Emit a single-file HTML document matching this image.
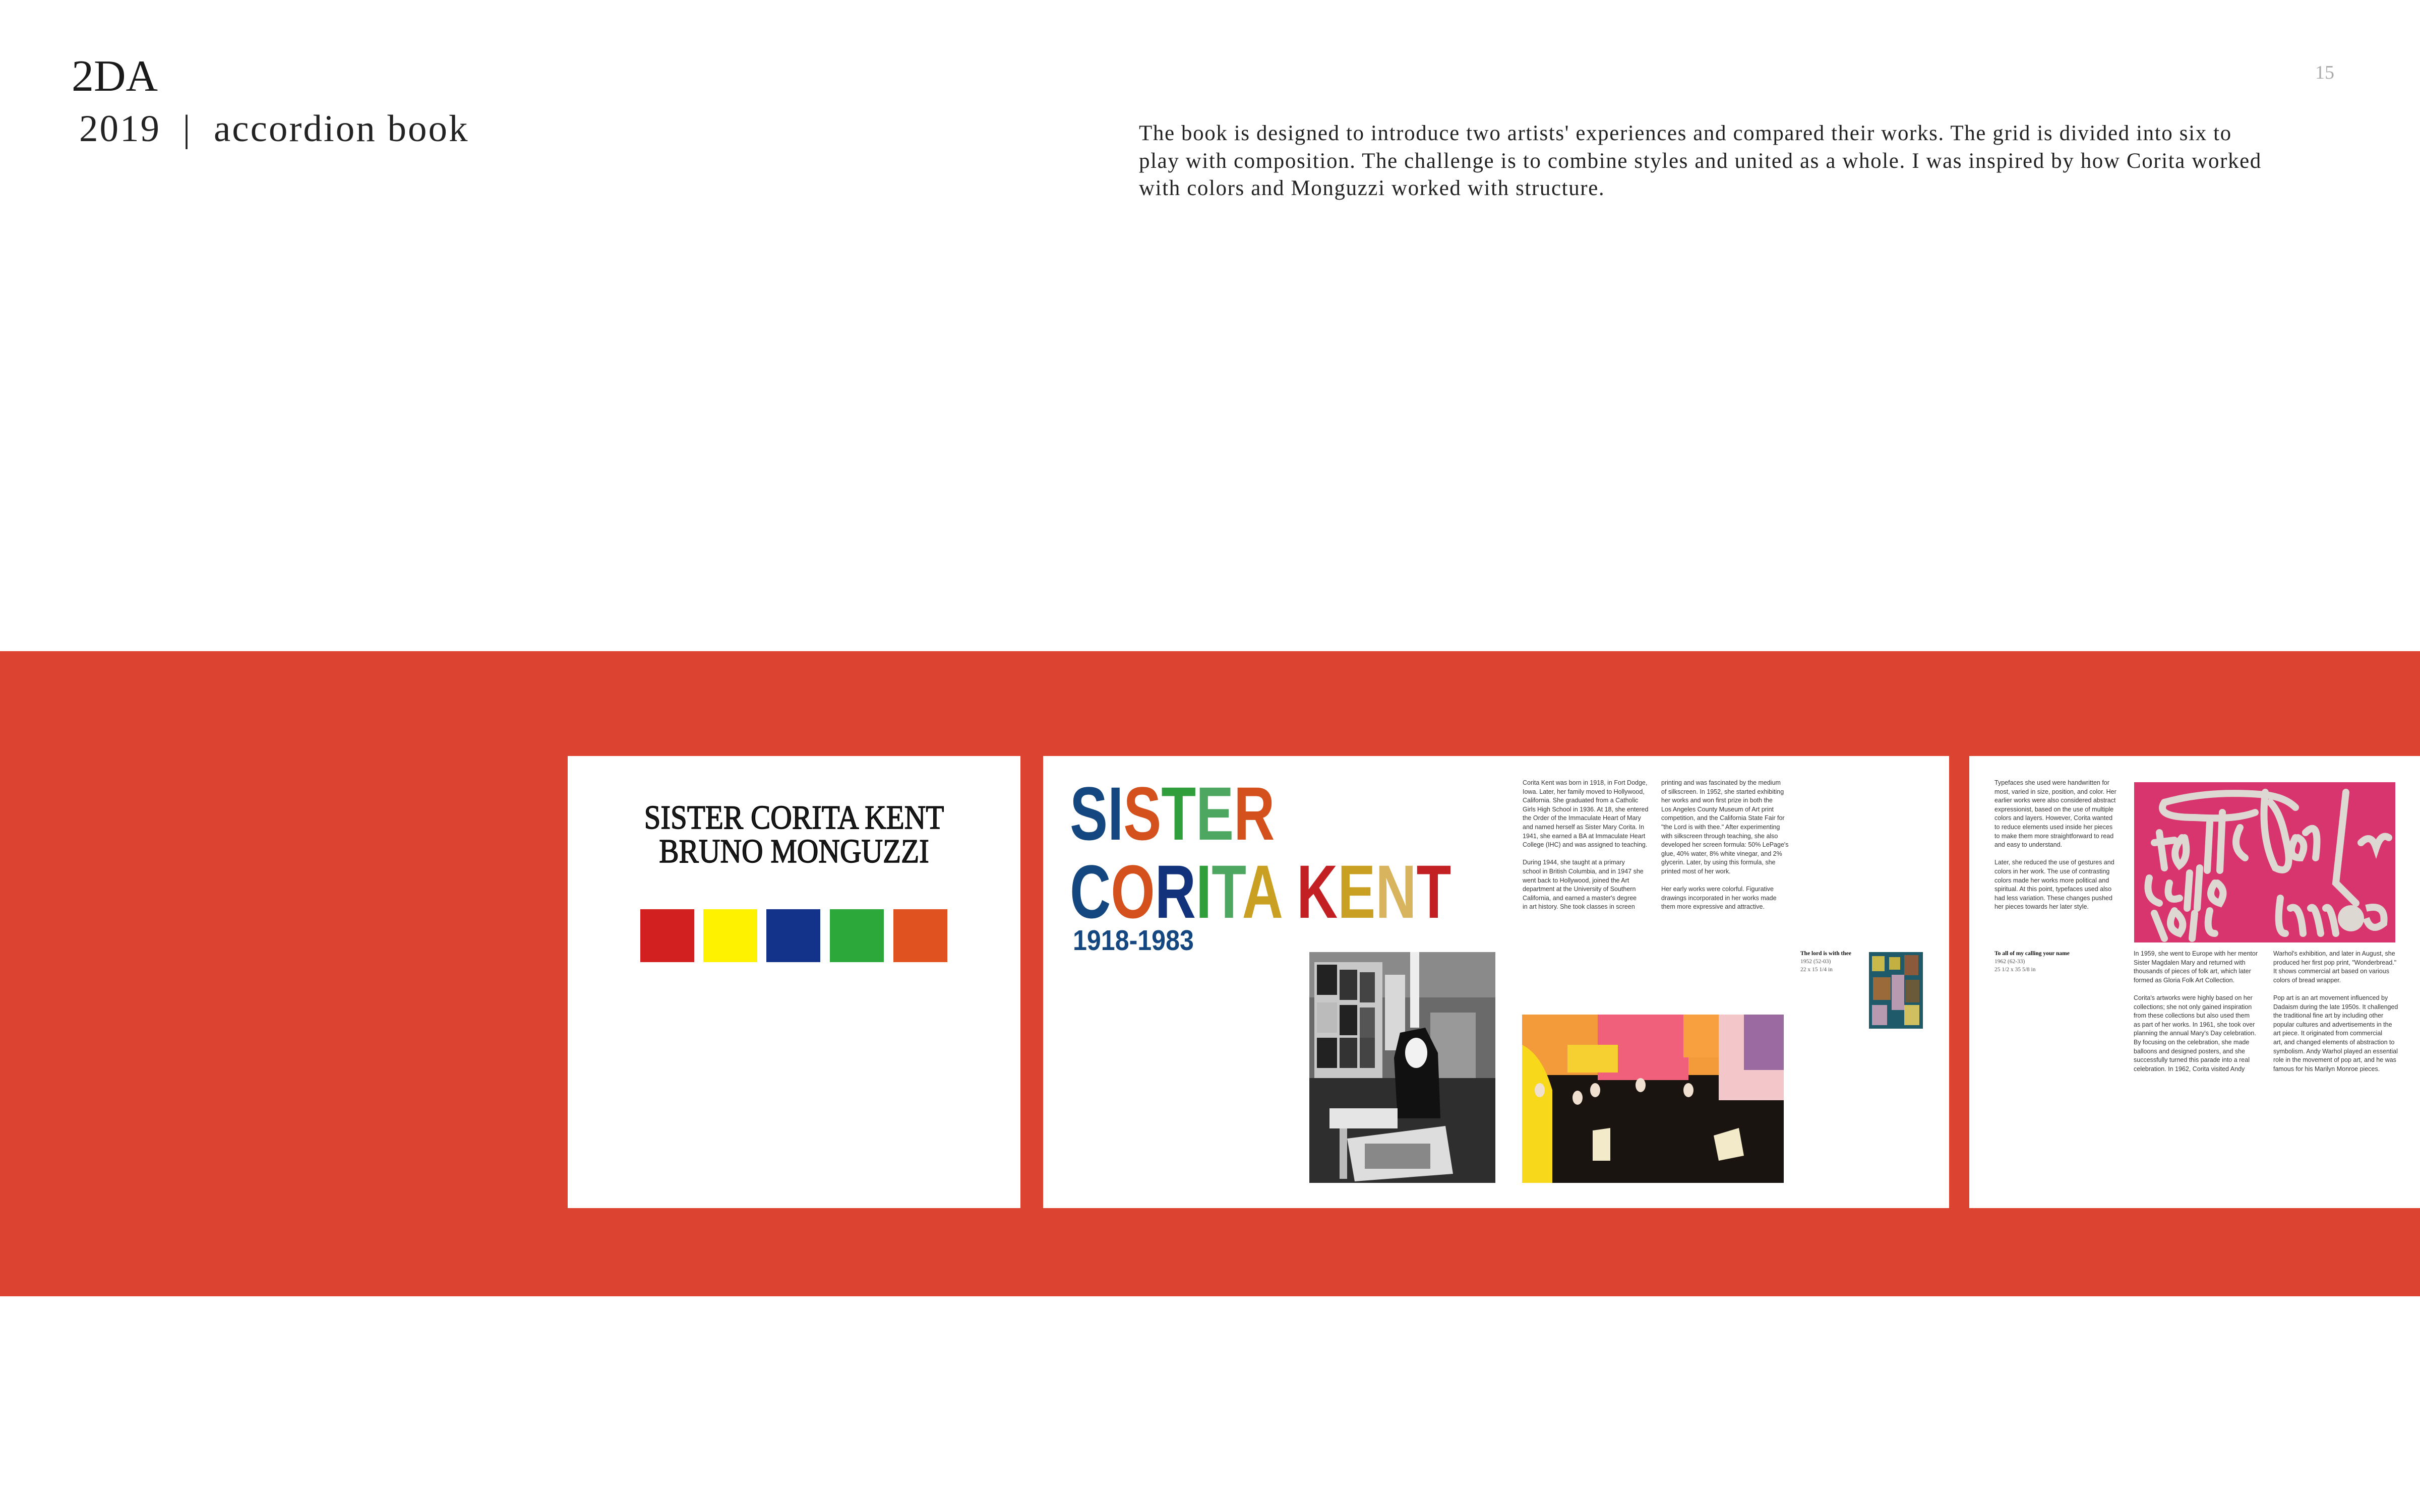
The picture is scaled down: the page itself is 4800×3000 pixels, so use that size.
<!DOCTYPE html>
<html><head><meta charset="utf-8">
<style>
html,body{margin:0;padding:0;}
body{width:4800px;height:3000px;position:relative;background:#fff;overflow:hidden;font-family:"Liberation Serif",serif;color:#1a1a1a;}
.abs{position:absolute;}
.t2da{left:142px;top:108px;font-size:88px;line-height:1;}
.sub{left:157px;top:218px;font-size:75px;line-height:1;font-weight:300;color:#222;white-space:nowrap;letter-spacing:3px;}
.desc{left:2259px;top:238px;font-size:43px;line-height:54.5px;white-space:nowrap;color:#222;letter-spacing:1.6px;}
.pg{left:4592px;top:122px;font-size:38px;color:#aaa;}
.band{left:0;top:1292px;width:4800px;height:1280px;background:#dd4331;}
.panel{background:#fff;top:1500px;height:897px;}
.ttl{font-size:67px;line-height:1;white-space:nowrap;transform-origin:center top;-webkit-text-stroke:1.4px #000;}
.sq{top:1804px;width:107px;height:105px;}
.big{font-family:"Liberation Sans",sans-serif;font-weight:bold;font-size:150px;line-height:1;white-space:nowrap;transform:scaleX(0.75);transform-origin:left top;}
.sm{font-family:"Liberation Sans Narrow","Liberation Sans",sans-serif;font-size:12.5px;line-height:17.6px;white-space:nowrap;color:#333;}
.cap{font-family:"Liberation Serif",serif;font-size:11.5px;line-height:16px;color:#555;white-space:nowrap;}
</style></head><body>
<div class="abs t2da">2DA</div>
<div class="abs sub">2019 &nbsp;|&nbsp; accordion book</div>
<div class="abs desc">The book is designed to introduce two artists' experiences and compared their works. The grid is divided into six to<br>play with composition. The challenge is to combine styles and united as a whole. I was inspired by how Corita worked<br>with colors and Monguzzi worked with structure.</div>
<div class="abs pg">15</div>

<div class="abs band"></div>

<!-- panel 1 -->
<div class="abs panel" style="left:1126px;width:898px;"></div>
<div class="abs ttl" style="left:1126px;width:898px;text-align:center;top:1589px;transform:scaleX(0.88);">SISTER CORITA KENT</div>
<div class="abs ttl" style="left:1126px;width:898px;text-align:center;top:1656px;transform:scaleX(0.88);">BRUNO MONGUZZI</div>
<div class="abs sq" style="left:1270px;background:#d21f1f"></div>
<div class="abs sq" style="left:1395px;background:#fff200"></div>
<div class="abs sq" style="left:1520px;background:#13338a"></div>
<div class="abs sq" style="left:1646px;background:#2ca83a"></div>
<div class="abs sq" style="left:1772px;background:#e0521f"></div>

<!-- panel 2 -->
<div class="abs panel" style="left:2069px;width:1797px;"></div>
<div class="abs big" style="left:2122px;top:1539px;"><span style="color:#14467f">SI</span><span style="color:#d4501d">S</span><span style="color:#2f9e3b">T</span><span style="color:#4ea761">E</span><span style="color:#d4501d">R</span></div>
<div class="abs big" style="left:2122px;top:1694px;"><span style="color:#14467f">C</span><span style="color:#d4501d">O</span><span style="color:#12327c">R</span><span style="color:#2f9e3b">I</span><span style="color:#4ea761">T</span><span style="color:#c9a021">A</span> <span style="color:#c32024">K</span><span style="color:#c9a021">E</span><span style="color:#d8b45f">N</span><span style="color:#c32024">T</span></div>
<div class="abs" style="left:2128px;top:1838px;font-family:'Liberation Sans',sans-serif;font-weight:bold;font-size:57px;color:#14467f;transform:scaleX(0.88);transform-origin:left top;line-height:1;">1918-1983</div>

<div class="abs sm" style="left:3020px;top:1545px;">Corita Kent was born in 1918, in Fort Dodge,<br>Iowa. Later, her family moved to Hollywood,<br>California. She graduated from a Catholic<br>Girls High School in 1936. At 18, she entered<br>the Order of the Immaculate Heart of Mary<br>and named herself as Sister Mary Corita. In<br>1941, she earned a BA at Immaculate Heart<br>College (IHC) and was assigned to teaching.<br><br>During 1944, she taught at a primary<br>school in British Columbia, and in 1947 she<br>went back to Hollywood, joined the Art<br>department at the University of Southern<br>California, and earned a master's degree<br>in art history. She took classes in screen</div>
<div class="abs sm" style="left:3295px;top:1545px;">printing and was fascinated by the medium<br>of silkscreen. In 1952, she started exhibiting<br>her works and won first prize in both the<br>Los Angeles County Museum of Art print<br>competition, and the California State Fair for<br>"the Lord is with thee." After experimenting<br>with silkscreen through teaching, she also<br>developed her screen formula: 50% LePage's<br>glue, 40% water, 8% white vinegar, and 2%<br>glycerin. Later, by using this formula, she<br>printed most of her work.<br><br>Her early works were colorful. Figurative<br>drawings incorporated in her works made<br>them more expressive and attractive.</div>

<!-- BW photo -->
<svg class="abs" style="left:2597px;top:1889px;" width="369" height="458" viewBox="0 0 369 458">
<rect width="369" height="458" fill="#6a6a6a"/>
<rect x="0" y="0" width="369" height="90" fill="#8a8a8a"/>
<rect x="10" y="20" width="135" height="300" fill="#c8c8c8"/>
<rect x="15" y="25" width="40" height="60" fill="#222"/><rect x="60" y="35" width="35" height="60" fill="#333"/><rect x="100" y="40" width="30" height="60" fill="#444"/>
<rect x="15" y="100" width="40" height="60" fill="#bbb"/><rect x="60" y="105" width="35" height="60" fill="#222"/><rect x="100" y="110" width="30" height="60" fill="#555"/>
<rect x="15" y="170" width="40" height="60" fill="#222"/><rect x="60" y="170" width="35" height="60" fill="#333"/><rect x="100" y="170" width="30" height="60" fill="#444"/>
<rect x="150" y="45" width="40" height="150" fill="#d8d8d8"/>
<rect x="200" y="0" width="18" height="150" fill="#eee"/>
<rect x="240" y="120" width="90" height="130" fill="#999"/>
<rect x="0" y="250" width="369" height="208" fill="#2e2e2e"/>
<path d="M180 160 L230 150 L255 200 L260 330 L175 330 L168 210 Z" fill="#111"/>
<ellipse cx="212" cy="200" rx="22" ry="30" fill="#f2f2f2"/>
<rect x="40" y="310" width="135" height="40" fill="#e5e5e5"/>
<path d="M75 370 L270 345 L285 440 L90 455 Z" fill="#ddd"/>
<rect x="110" y="380" width="130" height="50" fill="#888"/>
<rect x="60" y="350" width="15" height="100" fill="#bbb"/>
</svg>
<!-- colour photo -->
<svg class="abs" style="left:3019px;top:2013px;" width="519" height="334" viewBox="0 0 519 334">
<rect width="519" height="334" fill="#1a1410"/>
<rect x="0" y="0" width="519" height="120" fill="#f39a3a"/>
<rect x="150" y="0" width="180" height="130" fill="#f0607a"/>
<rect x="320" y="0" width="90" height="85" fill="#f8a040"/>
<rect x="390" y="0" width="129" height="170" fill="#f3c7c9"/>
<rect x="440" y="0" width="79" height="110" fill="#9a6aa0"/>
<path d="M0 60 Q40 80 60 150 L60 334 L0 334 Z" fill="#f8d81a"/>
<rect x="90" y="60" width="100" height="55" fill="#f6d030"/>
<ellipse cx="35" cy="150" rx="10" ry="14" fill="#f0e0d0"/>
<ellipse cx="110" cy="165" rx="10" ry="14" fill="#f0e0d0"/>
<ellipse cx="145" cy="150" rx="10" ry="14" fill="#f0e0d0"/>
<ellipse cx="235" cy="140" rx="10" ry="14" fill="#f0e0d0"/>
<ellipse cx="330" cy="150" rx="10" ry="14" fill="#f0e0d0"/>
<path d="M380 240 L430 225 L440 280 L390 290 Z" fill="#f2eac8"/>
<path d="M140 230 L175 225 L175 290 L140 290 Z" fill="#f2eac8"/>
</svg>
<div class="abs cap" style="left:3571px;top:1884px;"><b style="color:#111">The lord is with thee</b><br>1952 (52-03)<br>22 x 15 1/4 in</div>
<svg class="abs" style="left:3707px;top:1889px;" width="107" height="152" viewBox="0 0 107 152">
<rect width="107" height="152" fill="#1f5a6a"/>
<rect x="6" y="8" width="25" height="30" fill="#c9b84a"/><rect x="40" y="10" width="22" height="25" fill="#c2b040"/><rect x="70" y="6" width="28" height="40" fill="#8a5a3a"/>
<rect x="8" y="50" width="35" height="45" fill="#9a6a3a"/><rect x="45" y="45" width="25" height="70" fill="#b89ab0"/><rect x="72" y="55" width="28" height="45" fill="#6a5a3a"/>
<rect x="6" y="105" width="30" height="40" fill="#b89ab0"/><rect x="70" y="105" width="30" height="40" fill="#d0c060"/>
</svg>

<!-- panel 3 -->
<div class="abs panel" style="left:3906px;width:894px;"></div>
<div class="abs sm" style="left:3956px;top:1545px;">Typefaces she used were handwritten for<br>most, varied in size, position, and color. Her<br>earlier works were also considered abstract<br>expressionist, based on the use of multiple<br>colors and layers. However, Corita wanted<br>to reduce elements used inside her pieces<br>to make them more straightforward to read<br>and easy to understand.<br><br>Later, she reduced the use of gestures and<br>colors in her work. The use of contrasting<br>colors made her works more political and<br>spiritual. At this point, typefaces used also<br>had less variation. These changes pushed<br>her pieces towards her later style.</div>
<svg class="abs" style="left:4233px;top:1552px;" width="518" height="318" viewBox="0 0 518 318">
<rect width="518" height="318" fill="#d8356f"/>
<g fill="none" stroke="#ddd8d2" stroke-width="14" stroke-linecap="round">
<path d="M60 40 Q150 15 260 25 Q300 30 320 50"/>
<path d="M60 40 Q40 70 120 70 Q200 75 240 60"/>
<path d="M50 100 L60 170 M40 120 L80 115"/>
<path d="M95 110 Q70 140 90 165 Q110 150 100 110"/>
<path d="M150 80 L145 175 M175 60 L170 175"/>
<path d="M210 90 Q190 130 220 150"/>
<path d="M260 20 Q250 110 280 170 Q320 190 300 110 Q290 60 270 40"/>
<path d="M320 110 Q300 150 330 150 Q345 120 325 110 M340 100 Q370 70 360 150"/>
<path d="M420 20 L400 200 L440 240"/>
<path d="M450 120 Q470 100 480 130 Q490 100 505 110"/>
<path d="M30 190 Q20 230 50 240 M70 200 Q60 240 90 230"/>
<path d="M110 180 L105 250 M130 170 L125 250 M160 200 Q140 230 170 240 Q185 215 165 200"/>
<path d="M40 260 L60 310 M80 255 Q60 290 90 300 Q105 280 85 260 M120 260 L115 310 M150 255 Q140 300 160 300"/>
<path d="M290 230 Q280 300 300 300 M310 250 Q330 240 335 300 M350 250 Q360 240 370 300 M380 250 Q390 240 400 300"/>
</g>
<circle cx="430" cy="270" r="26" fill="#ddd8d2"/>
<path d="M460 250 Q500 240 495 280 Q470 300 460 270" fill="none" stroke="#ddd8d2" stroke-width="14"/>
</svg>
<div class="abs cap" style="left:3956px;top:1884px;"><b style="color:#111">To all of my calling your name</b><br>1962 (62-33)<br>25 1/2 x 35 5/8 in</div>
<div class="abs sm" style="left:4232px;top:1884px;">In 1959, she went to Europe with her mentor<br>Sister Magdalen Mary and returned with<br>thousands of pieces of folk art, which later<br>formed as Gloria Folk Art Collection.<br><br>Corita's artworks were highly based on her<br>collections; she not only gained inspiration<br>from these collections but also used them<br>as part of her works. In 1961, she took over<br>planning the annual Mary's Day celebration.<br>By focusing on the celebration, she made<br>balloons and designed posters, and she<br>successfully turned this parade into a real<br>celebration. In 1962, Corita visited Andy</div>
<div class="abs sm" style="left:4509px;top:1884px;">Warhol's exhibition, and later in August, she<br>produced her first pop print, "Wonderbread."<br>It shows commercial art based on various<br>colors of bread wrapper.<br><br>Pop art is an art movement influenced by<br>Dadaism during the late 1950s. It challenged<br>the traditional fine art by including other<br>popular cultures and advertisements in the<br>art piece. It originated from commercial<br>art, and changed elements of abstraction to<br>symbolism. Andy Warhol played an essential<br>role in the movement of pop art, and he was<br>famous for his Marilyn Monroe pieces.</div>
</body></html>
